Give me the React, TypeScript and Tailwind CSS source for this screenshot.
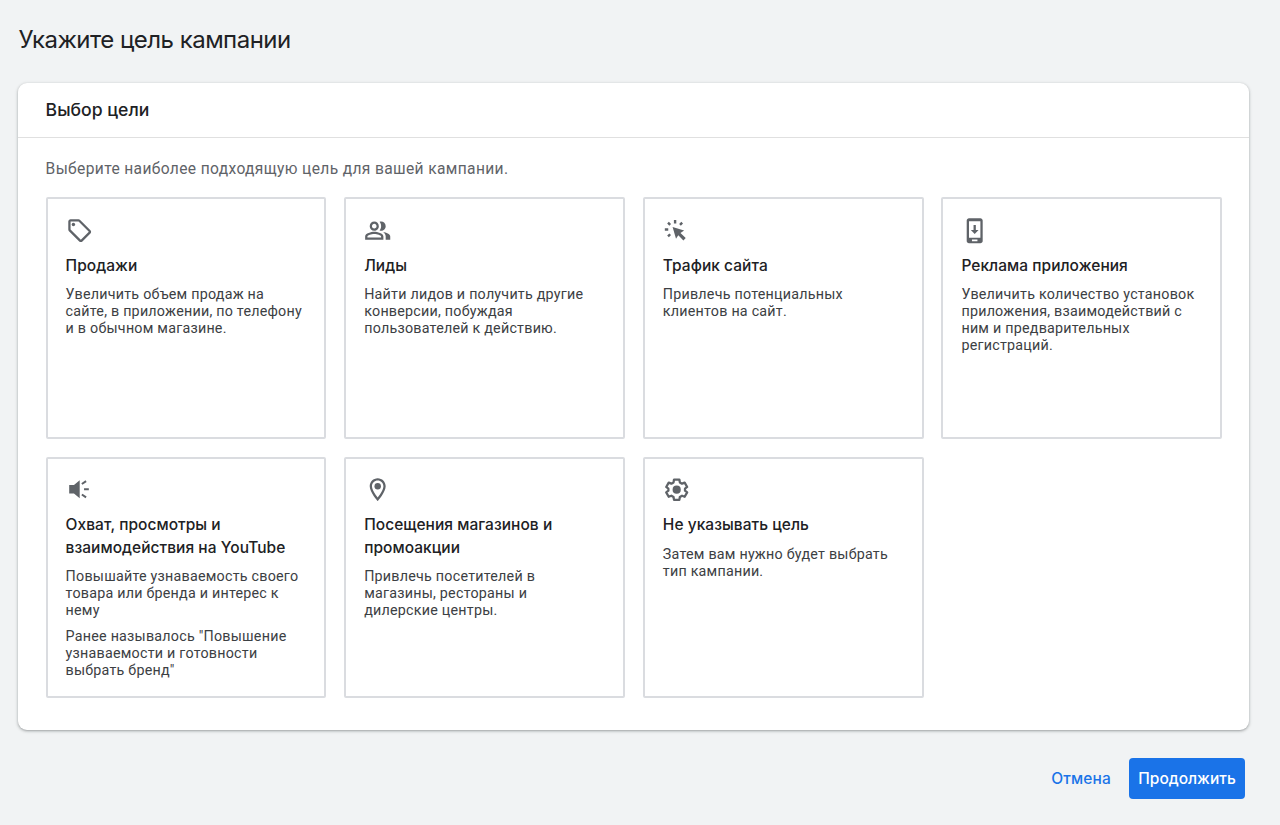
import type { ReactNode } from 'react';

interface Goal {
  title: string;
  text: string[];
  icon: ReactNode;
}

const goals: Goal[] = [
  {
    title: 'Продажи',
    text: ['Увеличить объем продаж на\nсайте, в приложении, по телефону\nи в обычном магазине.'],
    icon: (
      <>
        <path d="M21.41 11.58l-9-9C12.05 2.22 11.55 2 11 2H4c-1.1 0-2 .9-2 2v7c0 .55.22 1.05.59 1.42l9 9c.36.36.86.58 1.41.58s1.05-.22 1.41-.59l7-7c.37-.36.59-.86.59-1.41s-.23-1.06-.59-1.42zM13 20.01L4 11V4h7v-.01l9 9-7 7.02z" />
        <circle cx="6.5" cy="6.5" r="1.5" />
      </>
    ),
  },
  {
    title: 'Лиды',
    text: ['Найти лидов и получить другие\nконверсии, побуждая\nпользователей к действию.'],
    icon: (
      <path d="M16.67 13.13C18.04 14.06 19 15.32 19 17v3h4v-3c0-2.18-3.57-3.47-6.33-3.87zM15 12c2.21 0 4-1.79 4-4s-1.79-4-4-4c-.47 0-.91.1-1.33.24C14.5 5.27 15 6.58 15 8s-.5 2.73-1.33 3.76c.42.14.86.24 1.33.24zM9 12c2.21 0 4-1.79 4-4s-1.79-4-4-4-4 1.79-4 4 1.79 4 4 4zm0-6c1.1 0 2 .9 2 2s-.9 2-2 2-2-.9-2-2 .9-2 2-2zM9 13c-2.67 0-8 1.34-8 4v3h16v-3c0-2.66-5.33-4-8-4zm6 5H3v-.99C3.2 16.29 6.3 15 9 15s5.8 1.29 6 2v1z" />
    ),
  },
  {
    title: 'Трафик сайта',
    text: ['Привлечь потенциальных\nклиентов на сайт.'],
    icon: (
      <>
        <path d="M8.4 8.8l10.1 3.1-3.2 2.1 4.6 4.5-2 2-4.5-4.6-2 3.1z" />
        <path
          d="M1.6 11h3M4.4 5l1.9 1.9M10.6 2.7v3M16.8 5l-1.9 1.9M4.4 17l1.9-1.9"
          fill="none"
          stroke="currentColor"
          strokeWidth="2.1"
        />
      </>
    ),
  },
  {
    title: 'Реклама приложения',
    text: ['Увеличить количество установок\nприложения, взаимодействий с\nним и предварительных\nрегистраций.'],
    icon: (
      <path
        fillRule="evenodd"
        d="M7 1h10c1.1 0 2 .9 2 2v18c0 1.1-.9 2-2 2H7c-1.1 0-2-.9-2-2V3c0-1.1.9-2 2-2zm0 2.8v14.4h10V3.8H7zM9.6 19.8v1.4h4.8v-1.4H9.6zM11 7h2v4.3h2.4L12 14.8l-3.4-3.5H11V7z"
      />
    ),
  },
  {
    title: 'Охват, просмотры и\nвзаимодействия на YouTube',
    text: [
      'Повышайте узнаваемость своего\nтовара или бренда и интерес к\nнему',
      'Ранее называлось "Повышение\nузнаваемости и готовности\nвыбрать бренд"',
    ],
    icon: (
      <>
        <path d="M2.8 7.8h4.2l5-4v15.8l-5-4.2H2.8z" />
        <path
          d="M15.8 11.6h4.2M13.9 7l3.7-2.5M13.9 16.2l3.7 2.5"
          fill="none"
          stroke="currentColor"
          strokeWidth="1.8"
        />
      </>
    ),
  },
  {
    title: 'Посещения магазинов и\nпромоакции',
    text: ['Привлечь посетителей в\nмагазины, рестораны и\nдилерские центры.'],
    icon: (
      <>
        <path d="M12 2C8.13 2 5 5.13 5 9c0 5.25 7 13 7 13s7-7.75 7-13c0-3.87-3.13-7-7-7zM7 9c0-2.76 2.24-5 5-5s5 2.24 5 5c0 2.88-2.88 7.19-5 9.88C9.92 16.21 7 11.85 7 9z" />
        <circle cx="12" cy="9" r="2.8" />
      </>
    ),
  },
  {
    title: 'Не указывать цель',
    text: ['Затем вам нужно будет выбрать\nтип кампании.'],
    icon: (
      <>
        <path
          d="M9.67 3.1h4.66l.45 2.5 1.9 1.1 2.3-.9 2.2 3.8-1.9 1.5v1.8l1.9 1.5-2.2 3.8-2.3-.9-1.9 1.1-.45 2.5H9.67l-.45-2.5-1.9-1.1-2.3.9-2.2-3.8 1.9-1.5v-1.8l-1.9-1.5 2.2-3.8 2.3.9 1.9-1.1z"
          fill="none"
          stroke="currentColor"
          strokeWidth="2"
          strokeLinejoin="round"
        />
        <circle cx="12" cy="12" r="3.6" />
      </>
    ),
  },
];

function GoalCard({ title, text, icon }: Goal) {
  return (
    <button
      type="button"
      className="flex flex-col items-start text-left whitespace-pre rounded-xs border-2 border-[#dadce0] bg-white px-[18px] pt-[17.7px]"
    >
      <svg viewBox="0 0 24 24" fill="currentColor" className="size-[27.4px] shrink-0 text-[#5f6368]">
        {icon}
      </svg>
      <h3 className="mt-[10.6px] font-['Inter',sans-serif] text-[15.5px] leading-[22.9px] font-medium tracking-[0.04px] text-[#202124]">
        {title}
      </h3>
      {text.map((paragraph) => (
        <p key={paragraph} className="mt-[8.4px] mb-[0.4px] text-[14.3px] leading-[17px] tracking-[0.23px] text-[#3c4043]">
          {paragraph}
        </p>
      ))}
    </button>
  );
}

export default function App() {
  return (
    <div className="h-[825px] bg-[#f1f3f4] pl-[18.4px] pr-[30.6px] pt-[22px] font-['Roboto',sans-serif] text-[#202124]">
      <h1 className="font-['Inter',sans-serif] text-[24px] leading-9 tracking-[-0.52px]">Укажите цель кампании</h1>

      <section className="mt-[25px] h-[647px] rounded-[9px] bg-white shadow-[0_1px_2px_rgba(60,64,67,0.3),0_1px_3px_1px_rgba(60,64,67,0.15)]">
        <header className="flex h-[55px] items-center border-b border-[#e0e0e0] px-[27.2px]">
          <h2 className="font-['Inter',sans-serif] text-[17.6px] font-medium">Выбор цели</h2>
        </header>
        <div className="px-[27.2px] pt-[19px]">
          <p className="text-[15.6px] leading-6 tracking-[0.35px] text-[#5f6368]">
            Выберите наиболее подходящую цель для вашей кампании.
          </p>
          <div className="mt-[16px] grid grid-cols-4 auto-rows-[241.8px] gap-x-[17.8px] gap-y-[17.8px]">
            {goals.map((goal) => (
              <GoalCard key={goal.title} {...goal} />
            ))}
          </div>
        </div>
      </section>

      <footer className="mt-[28px] flex items-center justify-end gap-[9px] pr-[4.4px] font-['Inter',sans-serif] text-[15.5px] font-medium">
        <button type="button" className="h-[41px] px-[9px] tracking-[0.15px] text-[#1a73e8]">
          Отмена
        </button>
        <button type="button" className="h-[41px] w-[116px] rounded-[4px] bg-[#1a73e8] text-white">
          Продолжить
        </button>
      </footer>
    </div>
  );
}
